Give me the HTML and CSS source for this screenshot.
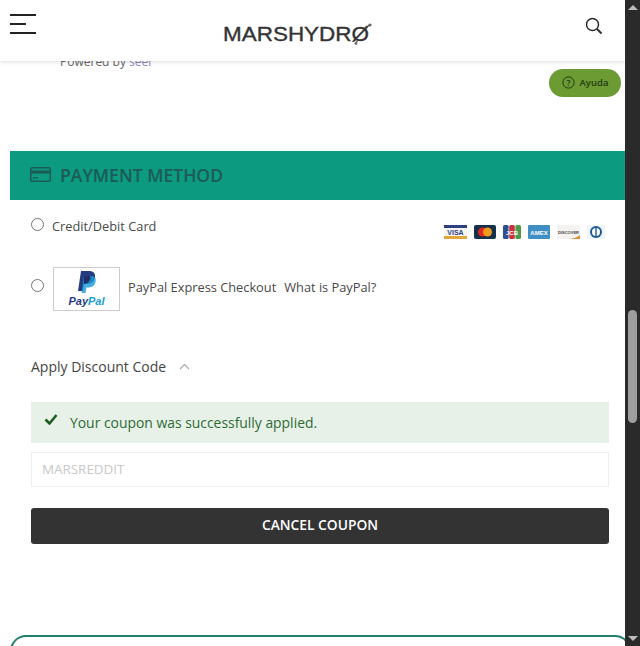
FILE: index.html
```html
<!DOCTYPE html>
<html lang="en">
<head>
<meta charset="utf-8">
<title>Checkout</title>
<link rel="stylesheet" href="styles.css">
</head>
<body>
<div class="viewport">
  <main class="page">
    <header class="header">
      <button class="burger" aria-label="Menu"><span class="line"></span><span class="line short"></span><span class="line"></span></button>
      <svg class="logo" width="152" height="24" viewBox="0 0 152 24" aria-label="Mars Hydro">
        <text x="1" y="19" class="logo-text" textLength="146" lengthAdjust="spacingAndGlyphs">MARSHYDRØ</text>
        <path d="M134 21l2-3M144 7l3-4" class="logo-arrow"/>
        <circle cx="148" cy="3" r="1.600" class="logo-dot"/>
        <circle cx="134" cy="21.400" r="1.400" class="logo-dot"/>
      </svg>
      <svg class="search" width="18" height="18" viewBox="0 0 18 18" aria-label="Search">
        <circle cx="7.500" cy="7.500" r="6" class="search-ring"/>
        <path d="M12 12l4.500 4.500" class="search-handle"/>
      </svg>
    </header>
    <p class="seel">Powered by <span class="seel-link">seel</span></p>
    <a class="help">
      <svg width="13" height="13" viewBox="0 0 13 13"><circle cx="6.500" cy="6.500" r="5.600" class="help-ring"/><text x="6.500" y="9.600" class="help-q">?</text></svg>
      <span>Ayuda</span>
    </a>

    <section class="payment">
      <h2 class="payment-head">
        <svg width="21" height="15" viewBox="0 0 21 15"><rect x="0.750" y="0.750" width="19.500" height="13.500" rx="1.500" class="card-outline"/><rect x="1" y="3.500" width="19" height="3" class="card-stripe"/><rect x="3" y="10" width="5" height="1.500" class="card-stripe"/></svg>
        <span>PAYMENT METHOD</span>
      </h2>
      <div class="method method-card">
        <input type="radio" name="pay" class="radio">
        <label class="method-label">Credit/Debit Card</label>
        <div class="cards">
          <svg width="23" height="14" viewBox="0 0 23 14"><rect width="23" height="14" fill="#f4f4f2"/><rect width="23" height="3" fill="#2f3f80"/><rect y="11" width="23" height="3" fill="#e0a93a"/><text x="11.500" y="10" class="card-word visa">VISA</text></svg>
          <svg width="22" height="14" viewBox="0 0 22 14"><rect width="22" height="14" rx="2" fill="#14304a"/><circle cx="8.500" cy="7" r="4.500" fill="#e0281f"/><circle cx="13.500" cy="7" r="4.500" fill="#f29a1e"/></svg>
          <svg width="18" height="14" viewBox="0 0 18 14"><rect x="0" width="5.600" height="14" rx="1.500" fill="#2a4f92"/><rect x="6.200" width="5.600" height="14" rx="1.500" fill="#c8323c"/><rect x="12.400" width="5.600" height="14" rx="1.500" fill="#4a9a48"/><text x="9" y="10" class="card-word jcb">JCB</text></svg>
          <svg width="22" height="14" viewBox="0 0 22 14"><rect width="22" height="14" rx="1" fill="#3f8fc2"/><text x="11" y="9.500" class="card-word amex">AMEX</text></svg>
          <svg width="23" height="14" viewBox="0 0 23 14"><rect width="23" height="14" fill="#f5f3f1"/><text x="11.500" y="8.500" class="card-word disc">DISCOVER</text><path d="M10 14c6 0 10-1.500 13-4v4z" fill="#e58a35"/></svg>
          <svg width="18" height="14" viewBox="0 0 18 14"><rect width="18" height="14" fill="#f1f5f9"/><circle cx="9" cy="7" r="6" fill="#1f5b98"/><circle cx="9" cy="7" r="4" fill="#fff"/><rect x="8.300" y="3" width="1.400" height="8" fill="#1f5b98"/></svg>
        </div>
      </div>
      <div class="method method-paypal">
        <input type="radio" name="pay" class="radio">
        <div class="paypal-box">
          <svg width="20" height="24" viewBox="0 0 20 24"><path d="M4 0h8c4 0 6.500 2 6 6-.6 5-4 7-8 7H7l-1.300 7H1z" fill="#253b80"/><path d="M7 5h7c3 0 5.200 1.500 4.700 5-.6 4.500-3.700 6.500-7.500 6.500H9.500L8.500 22H4.500z" fill="#179bd7" opacity=".8"/><path d="M7 5h6c1 2 .5 6-5.300 8H7z" fill="#222d65"/></svg>
          <span class="paypal-word"><b class="pay">Pay</b><b class="pal">Pal</b></span>
        </div>
        <label class="method-label paypal-label">PayPal Express Checkout</label>
        <a class="method-label what">What is PayPal?</a>
      </div>
      <div class="discount">
        <span>Apply Discount Code</span>
        <svg width="11" height="7" viewBox="0 0 11 7"><path d="M1 6l4.500-4.500L10 6" class="chevron"/></svg>
      </div>
      <div class="alert">
        <svg class="check" width="14" height="11" viewBox="0 0 14 11"><path d="M1.500 5.500l4 4L12.500 1" class="check-path"/></svg>
        <span>Your coupon was successfully applied.</span>
      </div>
      <input class="coupon" type="text" placeholder="MARSREDDIT" disabled>
      <button class="cancel">CANCEL COUPON</button>
    </section>
    <div class="next-card"></div>
  </main>
  <div class="scrollbar" aria-hidden="true">
    <span class="arrow arrow-up"></span>
    <span class="track"><span class="thumb"></span></span>
    <span class="arrow arrow-down"></span>
  </div>
</div>
</body>
</html>
```
FILE: styles.css
```css
* { box-sizing: border-box; }
html, body { margin: 0; padding: 0; height: 100%; overflow: hidden; background: #fff; }
body { font-family: "Open Sans", "Liberation Sans", sans-serif; color: #444; }

.viewport { display: flex; width: 640px; height: 646px; overflow: hidden; }
.page { position: relative; width: 625px; flex: none; overflow: hidden; }

.header {
  position: relative; z-index: 2; height: 61px; background: #fff;
  display: flex; align-items: center; justify-content: space-between;
  padding: 0 22px 0 10px;
  box-shadow: 0 1px 4px rgba(0,0,0,.14);
}
.burger { display: flex; flex-direction: column; gap: 7px; width: 26px; padding: 0; margin: -13px 0 0; border: 0; background: none; }
.line { display: block; height: 2px; width: 26px; background: #222; }
.line.short { width: 16px; }
.logo { margin: 7px 26px 0 0; }
.logo-text { font-family: "Liberation Sans", sans-serif; font-size: 20px; font-weight: 400; fill: #333; stroke: #333; stroke-width: .35; }
.logo-arrow { stroke: #555; stroke-width: 1.2; fill: none; }
.logo-dot { fill: #666; }
.search { margin-top: -9px; }
.search-ring { fill: none; stroke: #2c2c2c; stroke-width: 1.500; }
.search-handle { stroke: #2c2c2c; stroke-width: 2; fill: none; }

.seel { margin: -8px 0 0 60px; height: 17px; font-size: 12px; line-height: 17px; color: #666; }
.seel-link { color: #8a86c8; }

.help {
  position: absolute; left: 549px; top: 69px; width: 72px; height: 28px; border-radius: 14px;
  display: flex; align-items: center; justify-content: center; gap: 5px; padding-bottom: 1px;
  background: #6c9a33; color: #1e3a12; font-size: 9.500px; font-weight: 600;
}
.help-ring { fill: none; stroke: #1e3a12; stroke-width: 1; }
.help-q { font-size: 9px; text-anchor: middle; fill: #1e3a12; }

.payment { margin-top: 81px; }
.payment-head {
  margin: 0 0 0 10px; height: 49px; padding: 0 0 2px 20px; background: #0c9a80;
  display: flex; align-items: center; gap: 9px;
  font-size: 17.600px; font-weight: 600; color: #1d5a55;
}
.card-outline { fill: none; stroke: #1d5a55; stroke-width: 1.500; }
.card-stripe { fill: #1d5a55; }

.method { display: flex; align-items: center; padding-left: 31px; padding-right: 20px; }
.radio { width: 13px; height: 13px; margin: 0; flex: none; accent-color: #888; }
.method-label { font-size: 12.800px; color: #4a4a4a; }
.method-card { margin-top: 17px; height: 28px; align-items: flex-start; }
.method-card .method-label { margin-left: 8px; line-height: 18px; }
.method-card .radio { margin-top: 1px; }
.cards { margin-left: auto; margin-top: 8px; display: flex; gap: 7px; align-items: center; }
.card-word { font-family: "Liberation Sans", sans-serif; text-anchor: middle; font-weight: 700; }
.visa { font-size: 7px; fill: #2f3f80; }
.jcb { font-size: 6px; fill: #fff; }
.amex { font-size: 6px; fill: #fff; }
.disc { font-size: 4px; fill: #444; }

.method-paypal { margin-top: 22px; height: 44px; }
.method-paypal .radio { margin-top: -8px; }
.paypal-box {
  margin-left: 9px; width: 67px; height: 44px; border: 1px solid #ccc;
  display: flex; flex-direction: column; align-items: center; justify-content: flex-start; padding-top: 3px;
}
.paypal-word { font-family: "Liberation Sans", sans-serif; font-size: 11px; font-style: italic; line-height: 12px; }
.pay { color: #253b80; }
.pal { color: #179bd7; }
.paypal-label { margin-left: 8px; margin-top: -5px; }
.what { margin-left: 8px; margin-top: -5px; }

.discount { margin: 45px 0 0 31px; display: flex; align-items: center; gap: 13px; height: 20px; font-size: 14px; color: #444; }
.chevron { fill: none; stroke: #aaa; stroke-width: 1.200; }

.alert {
  margin: 26px 16px 0 31px; height: 41px; padding-left: 13px; background: #e8f1e8;
  display: flex; align-items: center; gap: 12px; font-size: 13.900px; color: #2d6b35;
}
.check { margin-top: -6px; }
.check-path { fill: none; stroke: #1c5a1e; stroke-width: 2.500; }

.coupon {
  display: block; margin: 9px 16px 0 31px; width: 578px; height: 35px; padding: 0 10px 2px;
  border: 1px solid #eee; background: #fff; font: 13.400px "Open Sans", sans-serif; outline: 0;
}
.coupon::placeholder { color: #c8c8c8; opacity: 1; }

.cancel {
  display: block; margin: 21px 16px 0 31px; width: 578px; height: 36px; padding: 0 0 3px; border: 0; border-radius: 3px;
  background: #333; color: #fff; font: 600 13.800px "Open Sans", sans-serif;
}

.next-card {
  margin: 91px -6px 0 10px; height: 60px; border: 2px solid #1f7f6c; border-bottom: 0;
  border-radius: 16px 16px 0 0;
}

.scrollbar { flex: none; width: 15px; height: 646px; background: #2a2a2a; display: flex; flex-direction: column; align-items: center; }
.track { flex: 1; width: 100%; position: relative; display: block; }
.thumb { position: absolute; left: 3px; top: 295px; width: 9px; height: 113px; border-radius: 5px; background: #9e9e9e; }
.arrow { flex: none; width: 0; height: 0; margin: 5px 0; border-left: 5px solid transparent; border-right: 5px solid transparent; }
.arrow-up { border-bottom: 5px solid #bbb; }
.arrow-down { border-top: 5px solid #bbb; }
```
